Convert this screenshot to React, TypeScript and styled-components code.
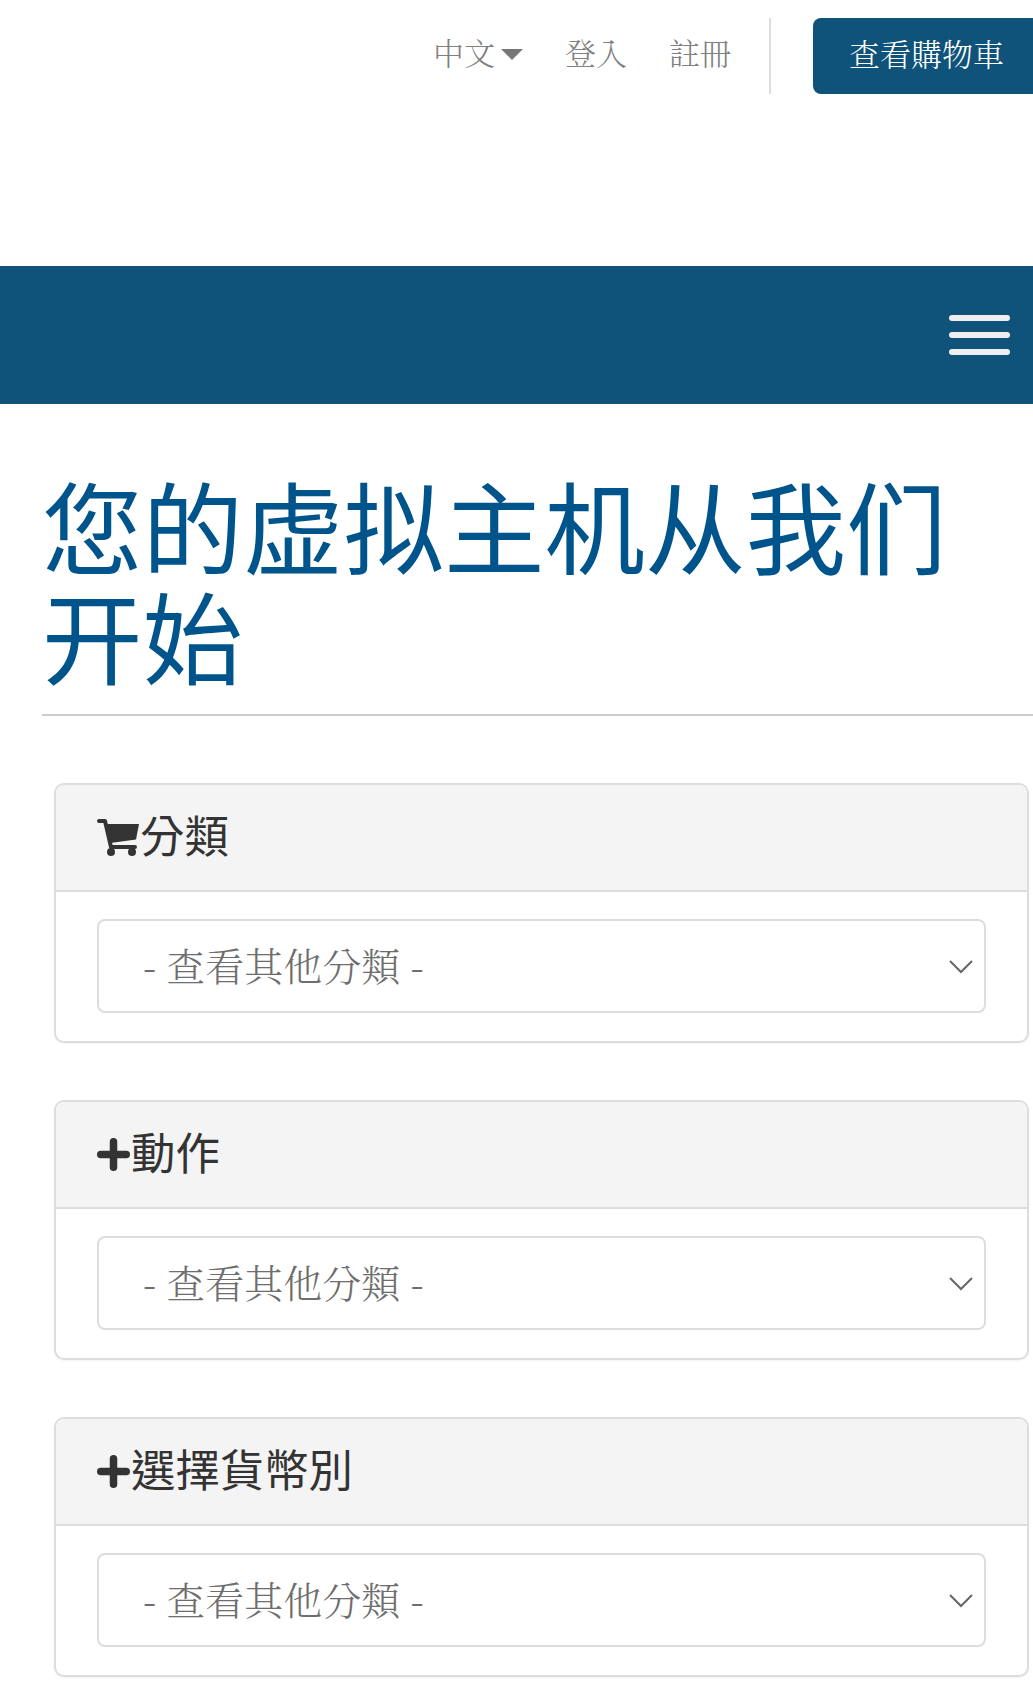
import React from "react";
import styled, { createGlobalStyle } from "styled-components";

const Global = createGlobalStyle`
  html, body { margin: 0; padding: 0; background: #fff; }
  body { width: 1033px; height: 1688px; overflow: hidden; font-family: "Noto Serif CJK TC", "AR PL UMing TW", "Noto Sans CJK TC", serif; }
  * { box-sizing: border-box; }
`;

const TopBar = styled.header`
  height: 266px;
  display: flex;
  justify-content: flex-end;
  align-items: flex-start;
  padding-top: 18px;
`;
const NavLink = styled.a`
  display: flex;
  align-items: center;
  height: 66px;
  margin-right: ${(p: { $gap: number }) => p.$gap}px;
  font-size: 31px;
  font-weight: 300;
  color: #808080;
`;
const Caret = styled.span`
  width: 0;
  height: 0;
  margin-left: 6px;
  margin-top: 6px;
  border-left: 11px solid transparent;
  border-right: 11px solid transparent;
  border-top: 11px solid #777;
`;
const Divider = styled.span`
  width: 2px;
  height: 76px;
  margin-right: 42px;
  background: #ddd;
`;
const CartButton = styled.a`
  width: 220px;
  height: 76px;
  display: flex;
  align-items: center;
  padding: 0 0 8px 36px;
  border-radius: 8px 0 0 8px;
  background: #0f527a;
  color: #fff;
  font-size: 31px;
  font-weight: 300;
`;
const MenuBar = styled.nav`
  height: 138px;
  display: flex;
  justify-content: flex-end;
  align-items: center;
  padding-right: 23px;
  background: #0f527a;
`;
const Burger = styled.div`
  width: 61px;
  display: flex;
  flex-direction: column;
  gap: 11px;
`;
const BurgerLine = styled.span`
  height: 6px;
  border-radius: 3px;
  background: #eee;
`;
const Title = styled.h1`
  margin: 64px 0 0 42px;
  padding-bottom: 26px;
  border-bottom: 2px solid #ccc;
  font: 400 100.5px/110px "Noto Sans CJK SC", sans-serif;
  color: #00548c;
`;
const CardList = styled.main`
  display: flex;
  flex-direction: column;
  gap: 57px;
  margin: 67px 4px 0 54px;
`;
const Card = styled.section`
  height: 260px;
  border: 2px solid #ddd;
  border-radius: 10px;
  box-shadow: 0 1px 2px rgba(0, 0, 0, 0.05);
  overflow: hidden;
`;
const CardHead = styled.h2`
  height: 107px;
  margin: 0;
  padding-left: 41px;
  display: flex;
  align-items: center;
  background: #f4f4f4;
  border-bottom: 2px solid #ddd;
  font: 400 44.4px "Noto Sans CJK TC", sans-serif;
  color: #333;
`;
const HeadLabel = styled.span`
  margin-bottom: 9px;
  margin-left: 1px;
`;
const CardBody = styled.div`
  padding: 27px 41px;
`;
const Select = styled.div`
  height: 94px;
  display: flex;
  align-items: center;
  justify-content: space-between;
  padding: 0 11px 0 44px;
  border: 2px solid #ddd;
  border-radius: 8px;
  font-size: 39px;
  font-weight: 300;
  color: #6e6e6e;
`;
const SelectLabel = styled.span`
  margin-bottom: 4px;
`;
const Chevron = styled.svg`
  width: 24px;
  height: 14px;
  margin-top: 2px;
  fill: none;
  stroke: #666;
  stroke-width: 2;
`;
const CartSvg = styled.svg`
  margin-right: -1px;
  fill: #333;
`;
const CartIcon = () => (
  <CartSvg width="43" height="38" viewBox="7 9 43 38">
    <path d="M9 11H15L21 37H45" fill="none" stroke="#333" strokeWidth="4" strokeLinecap="round" strokeLinejoin="round" />
    <path d="M17 14H49L46 29.5 20.5 33Z" />
    <circle cx="21" cy="42" r="4" />
    <circle cx="42" cy="42" r="4" />
  </CartSvg>
);
const PlusIcon = () => (
  <svg width="33" height="33" viewBox="0 0 33 33" fill="none" stroke="#333" strokeWidth="7.5" strokeLinecap="round">
    <path d="M3.75 16.5H29.25M16.5 3.75V29.25" />
  </svg>
);

const groups = [
  { icon: <CartIcon />, label: "分類" },
  { icon: <PlusIcon />, label: "動作" },
  { icon: <PlusIcon />, label: "選擇貨幣別" },
];

export default function App() {
  return (
    <>
      <Global />
      <TopBar>
        <NavLink $gap={42}>中文<Caret /></NavLink>
        <NavLink $gap={42}>登入</NavLink>
        <NavLink $gap={38}>註冊</NavLink>
        <Divider />
        <CartButton>查看購物車</CartButton>
      </TopBar>
      <MenuBar>
        <Burger><BurgerLine /><BurgerLine /><BurgerLine /></Burger>
      </MenuBar>
      <Title>您的虚拟主机从我们开始</Title>
      <CardList>
        {groups.map((g) => (
          <Card key={g.label}>
            <CardHead>{g.icon}<HeadLabel>{g.label}</HeadLabel></CardHead>
            <CardBody>
              <Select>
                <SelectLabel>- 查看其他分類 -</SelectLabel>
                <Chevron viewBox="0 0 24 14"><path d="M1 1l11 11L23 1" /></Chevron>
              </Select>
            </CardBody>
          </Card>
        ))}
      </CardList>
    </>
  );
}
